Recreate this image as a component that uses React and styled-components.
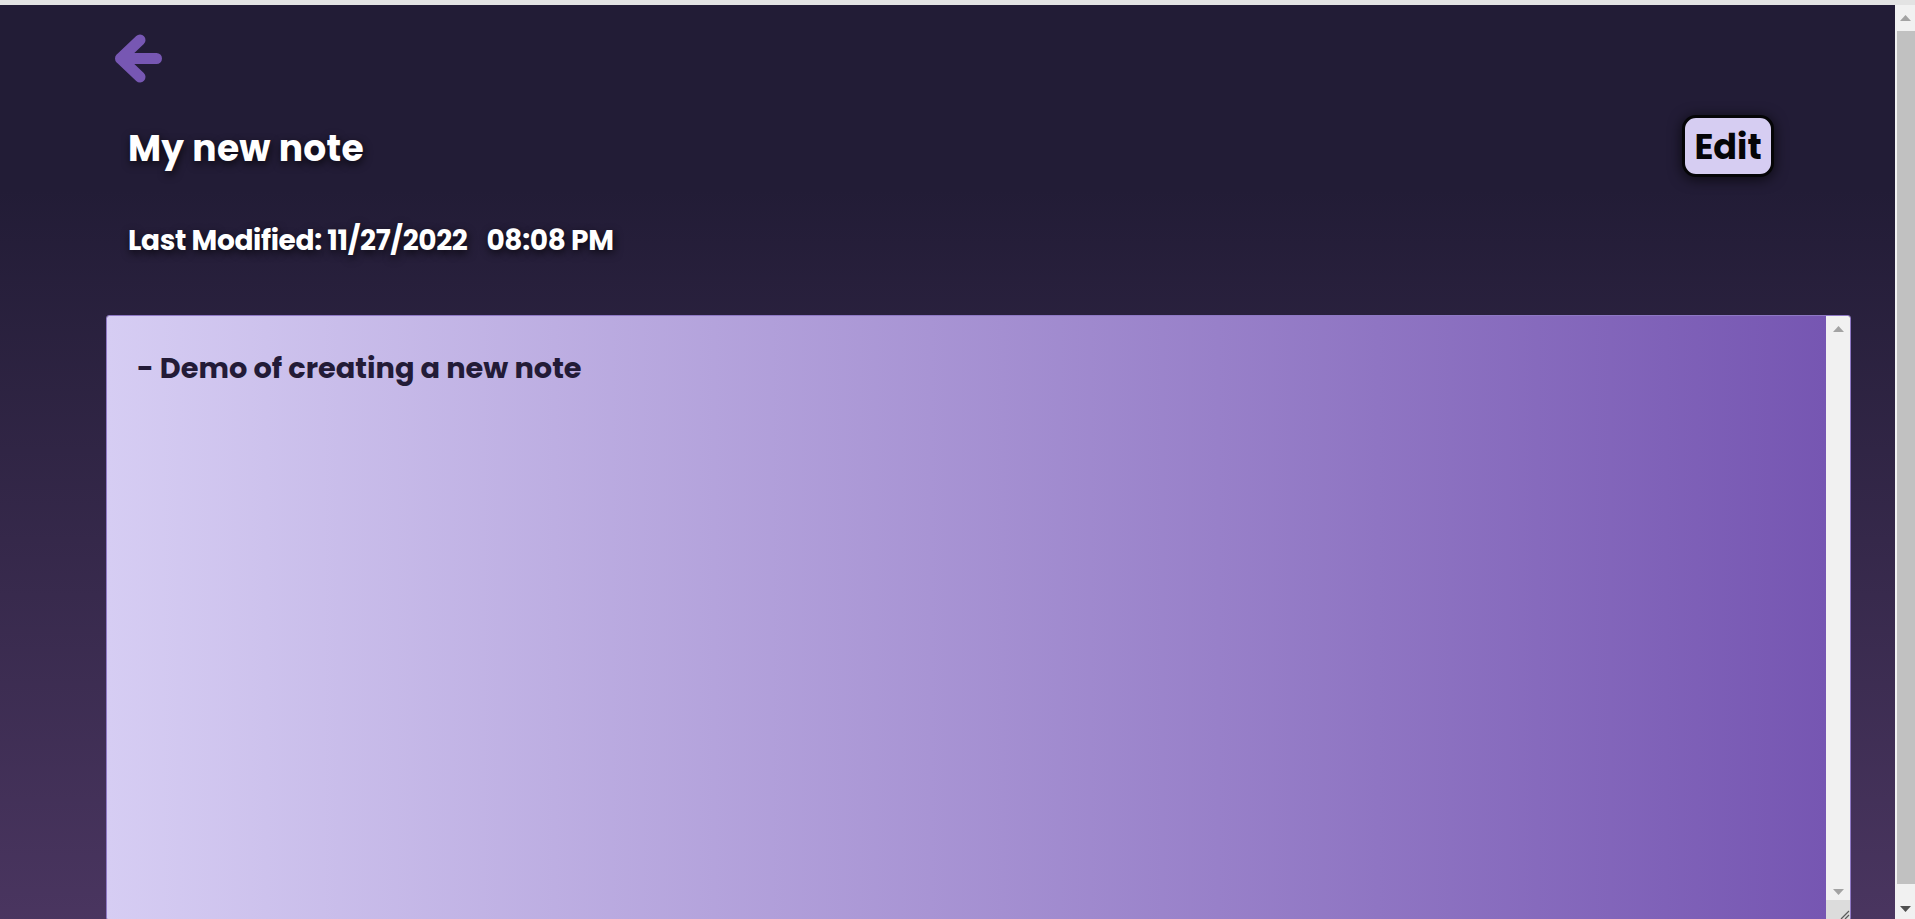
import styled, { createGlobalStyle } from 'styled-components';

const GlobalStyle = createGlobalStyle`
  html, body {
    margin: 0;
    padding: 0;
  }
  body {
    min-height: 100vh;
    background: linear-gradient(180deg, #221c36 20%, #4b3661 100%);
    font-family: Poppins, Inter, "Noto Sans", sans-serif;
  }
`;

const TopEdge = styled.div`
  height: 5px;
  background: #e3e3e3;
`;

const Main = styled.main`
  display: flex;
  flex-direction: column;
  padding: 0 0 25px 106px;
`;

const BackLink = styled.a`
  display: block;
  width: 52px;
  height: 56px;
  margin: 25px 0 0 4px;
  color: #7757b3;
  cursor: pointer;
`;

const HeaderRow = styled.div`
  display: flex;
  justify-content: space-between;
  align-items: flex-start;
  width: 1745px;
  box-sizing: border-box;
  padding: 0 77px 0 22px;
  margin-top: 29px;
`;

const TitleBlock = styled.div`
  display: flex;
  flex-direction: column;
  padding-top: 12px;
`;

const Title = styled.h1`
  margin: 0;
  font-size: 36px;
  line-height: 43px;
  font-weight: 700;
  color: #ffffff;
  letter-spacing: 0.3px;
  text-shadow: 1px 3px 9px rgba(0, 0, 0, 0.75);
`;

const Modified = styled.h3`
  margin: 54px 0 0;
  font-size: 28px;
  line-height: 34px;
  font-weight: 700;
  color: #ffffff;
  letter-spacing: -0.35px;
  text-shadow: 1px 3px 9px rgba(0, 0, 0, 0.75);
`;

const Time = styled.span`
  margin-left: 19px;
`;

const EditButton = styled.button`
  width: 92px;
  height: 62px;
  box-sizing: border-box;
  border: 3px solid #050507;
  border-radius: 14px;
  background: #d6cdf2;
  color: #050507;
  font-family: inherit;
  font-size: 35px;
  font-weight: 700;
  line-height: 1;
  padding: 0;
  box-shadow: 0 2px 14px rgba(0, 0, 0, 0.7);
  cursor: pointer;
`;

const NoteFrame = styled.div`
  display: flex;
  width: 1745px;
  height: 606px;
  margin-top: 57px;
  box-sizing: border-box;
  border: 1px solid #8e78c4;
  border-radius: 3px;
  overflow: hidden;
`;

const NoteArea = styled.textarea`
  flex: 1;
  display: block;
  margin: 0;
  padding: 31px 30px;
  border: none;
  background: linear-gradient(90deg, #d6cdf3 0%, #7656b2 100%);
  color: #231b37;
  font-family: inherit;
  font-size: 28.8px;
  line-height: 42px;
  font-weight: 700;
  resize: none;
  overflow: hidden;
  outline: none;
`;

const Rail = styled.div`
  display: flex;
  flex-direction: column;
  width: ${(p) => p.$width}px;
  background: #f1f1f1;
`;

const RailButton = styled.div`
  display: flex;
  align-items: center;
  justify-content: center;
  height: ${(p) => p.$height}px;
  color: ${(p) => p.$color};
`;

const RailFill = styled.div`
  flex: 1;
`;

const Thumb = styled.div`
  flex: 1;
  margin: 0 0 15px 2px;
  background: #c1c1c1;
`;

const ResizeGrip = styled.div`
  display: flex;
  align-items: flex-end;
  justify-content: flex-end;
  height: 20px;
  background: #dcdcdc;
  color: #5a5a5a;
`;

const PageScroll = styled(Rail)`
  position: fixed;
  top: 5px;
  right: 0;
  bottom: 0;
`;

const Triangle = ({ down }) => (
  <svg width="11" height="6" viewBox="0 0 11 6">
    <path d={down ? 'M0 0 H11 L5.5 6 Z' : 'M0 6 H11 L5.5 0 Z'} fill="currentColor" />
  </svg>
);

const BackArrow = () => (
  <svg width="52" height="56" viewBox="0 0 52 56" fill="none">
    <path
      d="M30 10 L10.5 28.5 L30 47 M10.5 28.5 L46.5 28.5"
      stroke="currentColor"
      strokeWidth="11"
      strokeLinecap="round"
      strokeLinejoin="round"
    />
  </svg>
);

const App = () => (
  <>
    <GlobalStyle />
    <TopEdge />
    <Main>
      <BackLink>
        <BackArrow />
      </BackLink>
      <HeaderRow>
        <TitleBlock>
          <Title>My new note</Title>
          <Modified>
            Last Modified: 11/27/2022
            <Time>08:08 PM</Time>
          </Modified>
        </TitleBlock>
        <EditButton>Edit</EditButton>
      </HeaderRow>
      <NoteFrame>
        <NoteArea defaultValue="- Demo of creating a new note" />
        <Rail $width={24}>
          <RailButton $height={26} $color="#a3a3a3">
            <Triangle />
          </RailButton>
          <RailFill />
          <RailButton $height={16} $color="#a3a3a3">
            <Triangle down />
          </RailButton>
          <ResizeGrip>
            <svg width="12" height="12" viewBox="0 0 12 12">
              <path d="M11 3 L3 11 M11 7 L7 11" stroke="currentColor" strokeWidth="1.2" />
            </svg>
          </ResizeGrip>
        </Rail>
      </NoteFrame>
    </Main>
    <PageScroll $width={20}>
      <RailButton $height={26} $color="#a3a3a3">
        <Triangle />
      </RailButton>
      <Thumb />
      <RailButton $height={20} $color="#505050">
        <Triangle down />
      </RailButton>
    </PageScroll>
  </>
);

export default App;
